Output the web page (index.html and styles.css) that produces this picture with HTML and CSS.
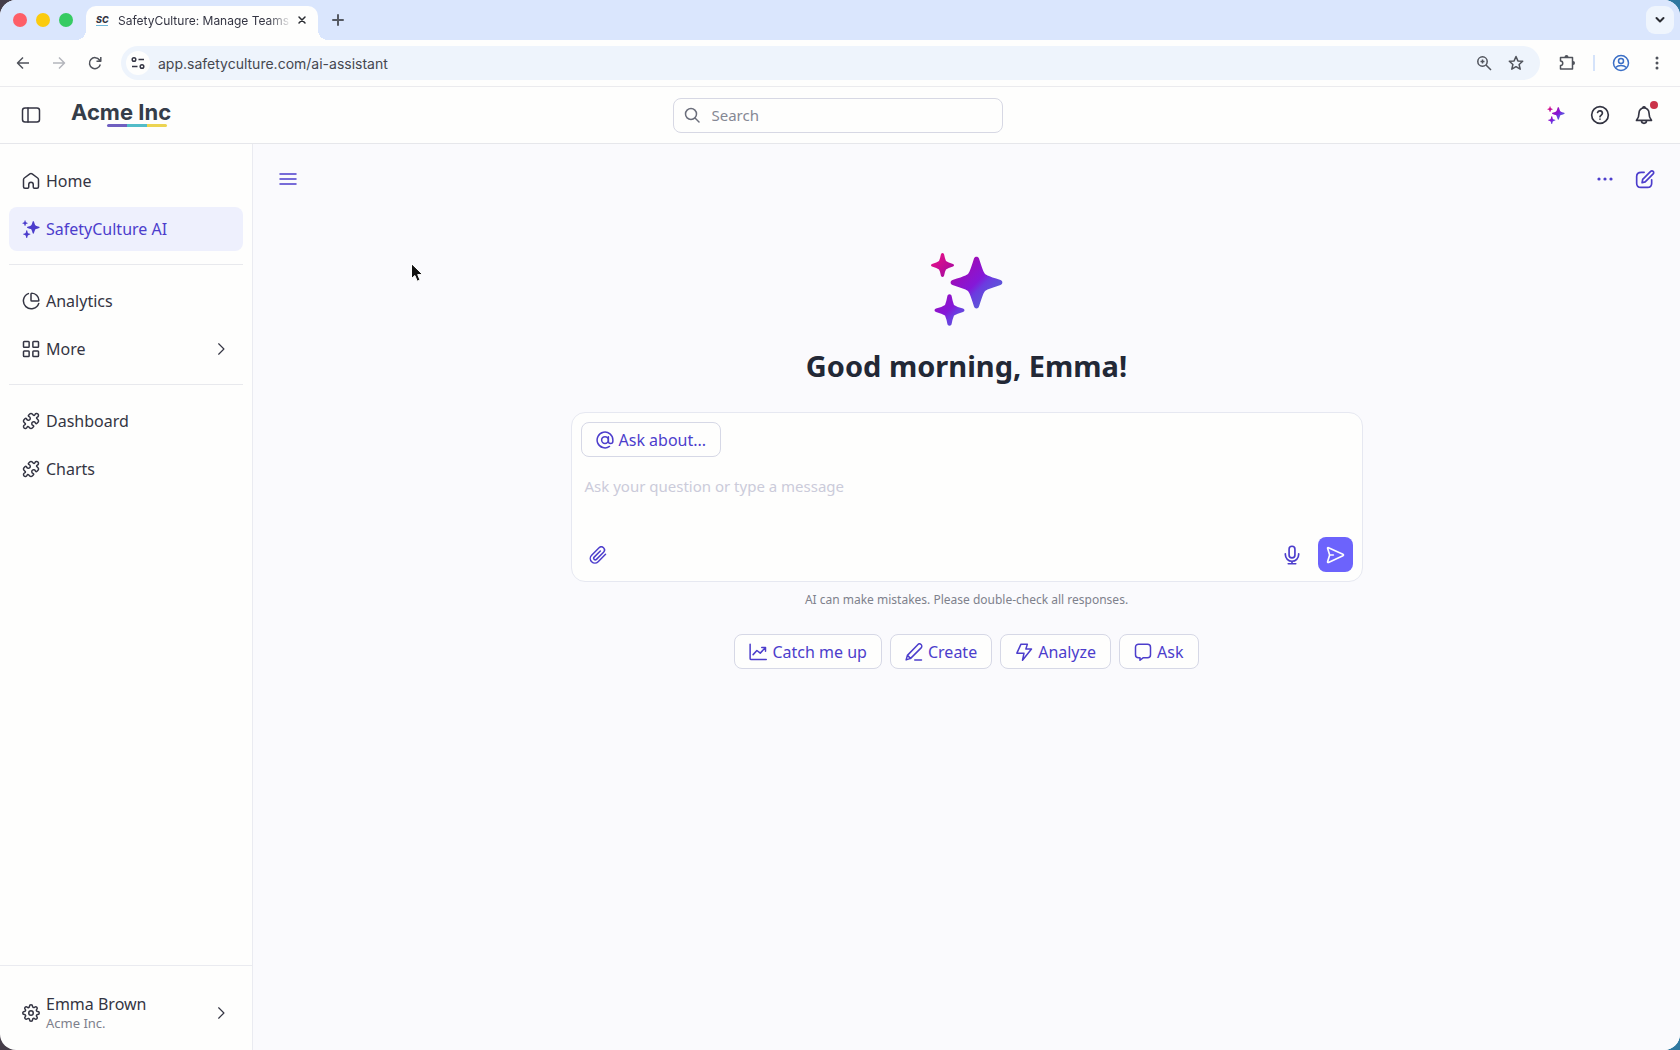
FILE: index.html
```html
<!DOCTYPE html>
<html lang="en">
  <head>
    <meta charset="UTF-8" />
    <meta name="viewport" content="width=device-width, initial-scale=1.0" />
    <title>SafetyCulture: Manage Teams</title>
    <link rel="stylesheet" href="styles.css">
  </head>
  <body>
    <!-- shared shapes -->
    <svg class="defs" width="0" height="0" aria-hidden="true">
      <defs>
        <linearGradient id="spark" gradientUnits="userSpaceOnUse" x1="0" y1="0" x2="60" y2="60">
          <stop offset="0.1" stop-color="#e0108a" />
          <stop offset="0.3" stop-color="#b30c9c" />
          <stop offset="0.48" stop-color="#9410c4" />
          <stop offset="0.64" stop-color="#8418d8" />
          <stop offset="0.72" stop-color="#6c3be0" />
          <stop offset="0.9" stop-color="#5a5cd6" />
        </linearGradient>
        <symbol id="sparkles" viewBox="0 0 74 74">
          <path d="M44 6.500C44.700 4 48.300 4 49 6.500Q52 16 53.500 19.500Q54.500 22.500 57.500 23.500Q61 25 70.500 28C73 28.700 73 32.300 70.500 33Q61 36 57.500 37.500Q54.500 38.500 53.500 41.500Q52 45 49 54.500C48.300 57 44.700 57 44 54.500Q41 45 39.500 41.500Q38.500 38.500 35.500 37.500Q32 36 22.500 33C20 32.300 20 28.700 22.500 28Q32 25 35.500 23.500Q38.500 22.500 39.500 19.500Q41 16 44 6.500Z" />
          <path d="M11 2Q12.500 0 14 2Q15 7 16 9Q18 10.500 23 12Q25 13 23 14.500Q18 16 16 17.500Q15 19 14 24Q12.500 26 11 24Q10 19 9 17.500Q7 16 2 14.500Q0 13 2 12Q7 10.500 9 9Q10 7 11 2Z" />
          <path d="M17.500 43.500Q19.500 41 21.500 43.500Q22.500 49 24 53Q27 55 33 56.500Q36 58 33 60Q27 61.500 24 63.500Q22.500 67 21.500 72.500Q19.500 75 17.500 72.500Q16.500 67 15 63.500Q12 61.500 6 60Q3 58 6 56.500Q12 55 15 53Q16.500 49 17.500 43.500Z" />
        </symbol>
        <symbol id="puzzle" viewBox="0 0 24 24">
          <path d="M19.439 7.85c-.049.322.059.648.289.878l1.568 1.568c.47.47.706 1.087.706 1.704s-.235 1.233-.706 1.704l-1.611 1.611a.98.98 0 0 1-.837.276c-.47-.07-.802-.48-.968-.925a2.501 2.501 0 1 0-3.214 3.214c.446.166.855.497.925.968a.979.979 0 0 1-.276.837l-1.61 1.61a2.404 2.404 0 0 1-1.705.707 2.402 2.402 0 0 1-1.704-.706l-1.568-1.568a1.026 1.026 0 0 0-.877-.29c-.493.074-.84.504-1.02.968a2.5 2.5 0 1 1-3.237-3.237c.464-.18.894-.527.967-1.02a1.026 1.026 0 0 0-.289-.877l-1.568-1.568A2.402 2.402 0 0 1 1.998 12c0-.617.236-1.234.706-1.704L4.23 8.77c.24-.24.581-.353.917-.303.515.077.877.528 1.073 1.01a2.5 2.5 0 1 0 3.259-3.259c-.482-.196-.933-.558-1.01-1.073-.05-.336.062-.676.303-.917l1.525-1.525A2.402 2.402 0 0 1 12 1.998c.617 0 1.234.236 1.704.706l1.568 1.568c.23.23.556.338.877.29.493-.074.84-.504 1.02-.968a2.5 2.5 0 1 1 3.237 3.237c-.464.18-.894.527-.967 1.02Z" />
        </symbol>
        <symbol id="chevron" viewBox="0 0 24 24">
          <path d="M8 3l9 9-9 9" />
        </symbol>
      </defs>
    </svg>

    <div class="window">
      <div class="tab-strip">
        <div class="lights">
          <span class="light red"></span>
          <span class="light yellow"></span>
          <span class="light green"></span>
        </div>
        <div class="tab">
          <span class="favicon">SC</span>
          <span class="tab-title">SafetyCulture: Manage Teams</span>
          <button class="tab-btn" aria-label="Close tab">
            <svg class="icon-10" viewBox="0 0 10 10"><path d="M2 2l6 6M8 2l-6 6" /></svg>
          </button>
        </div>
        <button class="tab-btn new-tab" aria-label="New tab">
          <svg class="icon-12" viewBox="0 0 12 12"><path d="M6 1v10M1 6h10" /></svg>
        </button>
        <button class="tab-btn tab-search" aria-label="Search tabs">
          <svg class="icon-10" viewBox="0 0 10 10"><path d="M1.500 3l3.500 3.500L8.500 3" /></svg>
        </button>
      </div>

      <div class="toolbar">
        <button class="tool" aria-label="Back">
          <svg class="icon-16" viewBox="0 0 16 16"><path d="M14 8H2.500M8 2.500L2.500 8 8 13.500" /></svg>
        </button>
        <button class="tool faded" aria-label="Forward">
          <svg class="icon-16" viewBox="0 0 16 16"><path d="M2 8h11.500M8 2.500L13.500 8 8 13.500" /></svg>
        </button>
        <button class="tool" aria-label="Reload">
          <svg class="icon-16" viewBox="0 0 16 16"><path d="M13.300 9.500A5.500 5.500 0 1 1 12.500 5L13.500 6M13.800 2v4.300H9.500" /></svg>
        </button>
        <div class="address">
          <button class="site-info" aria-label="Site information">
            <svg class="icon-16" viewBox="0 0 16 16"><circle cx="4" cy="4.500" r="1.800" /><path d="M8.500 4.500H14M2 11.500h5.500" /><circle cx="12" cy="11.500" r="1.800" /></svg>
          </button>
          <input class="url" type="text" aria-label="Address" value="app.safetyculture.com/ai-assistant">
          <button class="tool" aria-label="Zoom">
            <svg class="icon-16" viewBox="0 0 16 16"><circle cx="6.500" cy="6.500" r="4.700" /><path d="M10 10l5 5M6.500 4.500v4M4.500 6.500h4" /></svg>
          </button>
          <button class="tool" aria-label="Bookmark">
            <svg class="icon-16" viewBox="0 0 16 16"><path d="M8 1.500l1.900 4.400 4.800.4-3.600 3.200 1.100 4.700L8 11.700l-4.200 2.500 1.100-4.700L1.300 6.300l4.800-.4z" /></svg>
          </button>
        </div>
        <button class="tool" aria-label="Extensions">
          <svg class="icon-18" viewBox="0 0 18 18"><path d="M2.500 3.500h12v11.500h-12v-3.500c3 0 3-4.500 0-4.500z" /><path class="solid" d="M6.500 3a2 2 0 0 1 4 0zM15 7a2 2 0 0 1 0 4z" /></svg>
        </button>
        <span class="tool-divider"></span>
        <button class="tool profile" aria-label="Profile">
          <svg class="icon-18" viewBox="0 0 18 18"><circle cx="9" cy="9" r="7.500" /><circle cx="9" cy="7" r="2.500" /><path d="M3.500 13.500c3-2.600 8-2.600 11 0" /></svg>
        </button>
        <button class="tool" aria-label="Browser menu">
          <svg class="icon-16" viewBox="0 0 16 16"><g class="solid"><circle cx="8" cy="3" r="1.500" /><circle cx="8" cy="8" r="1.500" /><circle cx="8" cy="13" r="1.500" /></g></svg>
        </button>
      </div>

      <header class="app-header">
        <div class="header-left">
          <button class="icon-btn" aria-label="Toggle sidebar">
            <svg class="icon-20" viewBox="0 0 20 20"><rect x="1.500" y="3" width="17" height="14" rx="2.500" /><path d="M7 3v14" /></svg>
          </button>
          <a class="logo" href="#">
            Acme Inc
            <span class="logo-line"></span>
          </a>
        </div>
        <label class="search">
          <svg class="icon-16" viewBox="0 0 16 16"><circle cx="7" cy="7" r="5.500" /><path d="M11 11l4 4" /></svg>
          <input type="text" placeholder="Search" aria-label="Search">
        </label>
        <div class="header-right">
          <button class="icon-btn" aria-label="AI assistant">
            <svg class="icon-18 sparkle-gradient"><use href="#sparkles" /></svg>
          </button>
          <button class="icon-btn" aria-label="Help">
            <svg class="icon-20" viewBox="0 0 24 24"><circle cx="12" cy="12" r="10" /><path d="M9.100 9a3 3 0 0 1 5.800 1c0 2-2.900 2.600-2.900 4M12 17v.1" /></svg>
          </button>
          <button class="icon-btn" aria-label="Notifications">
            <svg class="icon-20" viewBox="0 0 24 24"><path d="M3 18.500c2.200-2.500 3-5 3-9a6 6 0 0 1 12 0c0 4 .8 6.500 3 9zM9 19a3 3 0 0 0 6 0M10.500 3.300a1.600 1.600 0 0 1 3 0" /></svg>
            <span class="badge"></span>
          </button>
        </div>
      </header>

      <div class="app">
        <aside class="sidebar">
          <nav>
            <a class="nav-item" href="#">
              <svg class="icon-18" viewBox="0 0 24 24"><path d="M2 10.200c0-.9.400-1.700 1.100-2.200l7.400-5.400a2.600 2.600 0 0 1 3 0L20.900 8c.7.500 1.100 1.300 1.100 2.200v9.300a2 2 0 0 1-2 2h-3.500a1.500 1.500 0 0 1-1.500-1.500v-3.500a3 3 0 0 0-6 0V20a1.500 1.500 0 0 1-1.500 1.500H4a2 2 0 0 1-2-2z" /></svg>
              <span>Home</span>
            </a>
            <a class="nav-item active" href="#">
              <svg class="icon-18 sparkle-solid"><use href="#sparkles" /></svg>
              <span>SafetyCulture AI</span>
            </a>
            <hr>
            <a class="nav-item" href="#">
              <svg class="icon-18" viewBox="0 0 24 24"><path d="M8.500 2.100a10.500 10.500 0 1 0 13.800 13.200M12 2.500a1 1 0 0 1 1-1 10 10 0 0 1 9.500 9.500 1 1 0 0 1-1 1H13a1 1 0 0 1-1-1z" /></svg>
              <span>Analytics</span>
            </a>
            <a class="nav-item" href="#">
              <svg class="icon-18" viewBox="0 0 24 24"><rect x="2" y="2" width="7.500" height="7.500" rx="1" /><rect x="14.500" y="2" width="7.500" height="7.500" rx="1" /><rect x="2" y="14.500" width="7.500" height="7.500" rx="1" /><rect x="14.500" y="14.500" width="7.500" height="7.500" rx="1" /></svg>
              <span>More</span>
              <svg class="icon-14 chevron"><use href="#chevron" /></svg>
            </a>
            <hr>
            <a class="nav-item" href="#">
              <svg class="icon-18"><use href="#puzzle" /></svg>
              <span>Dashboard</span>
            </a>
            <a class="nav-item" href="#">
              <svg class="icon-18"><use href="#puzzle" /></svg>
              <span>Charts</span>
            </a>
          </nav>
          <div class="account">
            <a class="nav-item" href="#">
              <svg class="icon-18" viewBox="0 0 24 24"><circle cx="12" cy="12" r="3" /><path d="M19.400 15a1.650 1.650 0 0 0 .33 1.820l.06.06a2 2 0 0 1 0 2.830 2 2 0 0 1-2.830 0l-.06-.06a1.650 1.650 0 0 0-1.820-.33 1.650 1.650 0 0 0-1 1.510V21a2 2 0 0 1-2 2 2 2 0 0 1-2-2v-.09A1.650 1.650 0 0 0 9 19.400a1.650 1.650 0 0 0-1.820.33l-.06.06a2 2 0 0 1-2.830 0 2 2 0 0 1 0-2.830l.06-.06a1.650 1.650 0 0 0 .33-1.820 1.650 1.650 0 0 0-1.510-1H3a2 2 0 0 1-2-2 2 2 0 0 1 2-2h.09A1.650 1.650 0 0 0 4.600 9a1.650 1.650 0 0 0-.33-1.820l-.06-.06a2 2 0 0 1 0-2.830 2 2 0 0 1 2.830 0l.06.06a1.650 1.650 0 0 0 1.820.33H9a1.650 1.650 0 0 0 1-1.510V3a2 2 0 0 1 2-2 2 2 0 0 1 2 2v.09a1.650 1.650 0 0 0 1 1.510 1.650 1.650 0 0 0 1.820-.33l.06-.06a2 2 0 0 1 2.830 0 2 2 0 0 1 0 2.830l-.06.06a1.650 1.650 0 0 0-.33 1.820V9a1.650 1.650 0 0 0 1.510 1H21a2 2 0 0 1 2 2 2 2 0 0 1-2 2h-.09a1.650 1.650 0 0 0-1.510 1z" /></svg>
              <span class="user">
                <span>Emma Brown</span>
                <small>Acme Inc.</small>
              </span>
              <svg class="icon-14 chevron"><use href="#chevron" /></svg>
            </a>
          </div>
        </aside>

        <main class="main">
          <div class="main-bar">
            <button class="icon-btn" aria-label="Conversations">
              <svg class="icon-20" viewBox="0 0 20 20"><path d="M2 5h16M2 10h16M2 15h16" /></svg>
            </button>
            <button class="icon-btn push" aria-label="More options">
              <svg class="icon-20" viewBox="0 0 20 20"><g class="solid"><circle cx="4" cy="10" r="1.600" /><circle cx="10" cy="10" r="1.600" /><circle cx="16" cy="10" r="1.600" /></g></svg>
            </button>
            <button class="icon-btn" aria-label="New chat">
              <svg class="icon-20" viewBox="0 0 24 24"><path d="M11 4H7.500C4 4 2 5.500 2 9v8c0 3.500 1.500 5 5 5h8c3.500 0 5-1.500 5-5v-4M8.500 16.500l.7-4L18.800 2.900a2.100 2.100 0 0 1 3 3L12.200 15.500z" /></svg>
            </button>
          </div>

          <section class="chat">
            <svg class="hero sparkle-gradient"><use href="#sparkles" /></svg>
            <h1>Good morning, Emma!</h1>
            <form class="composer">
              <button type="button" class="chip">
                <svg class="icon-18" viewBox="0 0 24 24"><circle cx="12" cy="12" r="4.500" /><path d="M16.500 7.500V13.500a3 3 0 0 0 6 0V12a10.500 10.500 0 1 0-4.500 8.600" /></svg>
                Ask about...
              </button>
              <textarea aria-label="Message" placeholder="Ask your question or type a message"></textarea>
              <div class="composer-actions">
                <button type="button" class="icon-btn" aria-label="Attach file">
                  <svg class="icon-18" viewBox="0 0 24 24"><path d="M22 11l-9.800 9.900a6 6 0 0 1-8.700-8.600l9.900-9.900a4.200 4.200 0 0 1 6 5.900l-9.500 9.500a2.100 2.100 0 0 1-3-3l8.200-8.200" /></svg>
                </button>
                <button type="button" class="icon-btn push" aria-label="Dictate">
                  <svg class="icon-20" viewBox="0 0 24 24"><rect x="8.500" y="1.500" width="7" height="14" rx="3.500" /><path d="M4 10.500v1a8 8 0 0 0 16 0v-1M12 19.500V22.500M7.500 22.500h9" /></svg>
                </button>
                <button type="submit" class="send" aria-label="Send">
                  <svg class="icon-20" viewBox="0 0 24 24"><path d="M10 12H5.500M5.400 12.700L3.200 19.800c-.3.900 0 1.500 1 1.100L21.500 12.900c.9-.4.900-1.300 0-1.800L4.200 3.200c-1-.4-1.300.200-1 1.100l2.200 7c.1.500.1.900 0 1.400z" /></svg>
                </button>
              </div>
            </form>
            <p class="note">AI can make mistakes. Please double-check all responses.</p>
            <div class="chips">
              <button class="chip">
                <svg class="icon-18" viewBox="0 0 24 24"><path d="M1.500 1.500v19a1.500 1.500 0 0 0 1.500 1.500h20M5.500 15.500l5-5.500 4.500 3.500 7-7.500M17 6h5v5" /></svg>
                Catch me up
              </button>
              <button class="chip">
                <svg class="icon-18" viewBox="0 0 24 24"><path d="M13 22.500h9M1.500 22.500l1.700-6L17 2.200a3 3 0 0 1 4.500 4.300L7.500 20.500zM3.200 16.500l4.300 4" /></svg>
                Create
              </button>
              <button class="chip">
                <svg class="icon-18" viewBox="0 0 24 24"><path d="M8 1.500h8.500L14.500 8H22L10 23l2-9.500H2.500z" /></svg>
                Analyze
              </button>
              <button class="chip">
                <svg class="icon-18" viewBox="0 0 24 24"><path d="M6 1.500h12a4 4 0 0 1 4 4v10a4 4 0 0 1-4 4h-5.500L8 23v-3.500H6a4 4 0 0 1-4-4v-10a4 4 0 0 1 4-4z" /></svg>
                Ask
              </button>
            </div>
          </section>
        </main>
      </div>
    </div>

    <svg class="cursor" viewBox="0 0 14 20" aria-hidden="true"><path d="M1.500 1v14.500l3.400-3 2.300 5.700 2.800-1.200-2.300-5.400h4.600z" /></svg>
  </body>
</html>
```
FILE: styles.css
```css
* {
  box-sizing: border-box;
}
body {
  margin: 0;
  height: 100vh;
  font-family: "Noto Sans", sans-serif;
  font-size: 16px;
  color: #343543;
  background: linear-gradient(to right, #453d48, #2f78a0);
}
button,
input,
textarea {
  font: inherit;
  color: inherit;
  border: none;
  background: none;
  padding: 0;
  outline: none;
}
button {
  display: flex;
  align-items: center;
  justify-content: center;
  cursor: pointer;
}
a {
  color: inherit;
  text-decoration: none;
}
svg {
  display: block;
  flex: none;
  fill: none;
  stroke: currentColor;
  stroke-width: 2;
  stroke-linecap: round;
  stroke-linejoin: round;
}
.defs {
  position: absolute;
}
.solid {
  fill: currentColor;
  stroke: none;
}
.icon-10 {
  width: 10px;
  height: 10px;
}
.icon-12 {
  width: 12px;
  height: 12px;
}
.icon-14 {
  width: 14px;
  height: 14px;
}
.icon-16 {
  width: 16px;
  height: 16px;
}
.icon-18 {
  width: 18px;
  height: 18px;
}
.icon-20 {
  width: 20px;
  height: 20px;
}
.sparkle-gradient {
  fill: url(#spark);
  stroke: none;
}
.sparkle-solid {
  fill: currentColor;
  stroke: none;
}
.window {
  display: flex;
  flex-direction: column;
  height: 100%;
  border-radius: 16px;
  overflow: hidden;
  background-color: #fefefd;
}

/* browser chrome */
.tab-strip {
  display: flex;
  align-items: center;
  height: 40px;
  flex: none;
  padding: 0 6px 0 13px;
  background-color: #dae6fd;
  font-family: Inter, sans-serif;
}
.lights {
  display: flex;
  gap: 9px;
  margin-right: 13px;
}
.light {
  width: 14px;
  height: 14px;
  border-radius: 50%;
}
.light.red {
  background-color: #fe5f68;
}
.light.yellow {
  background-color: #fbcb0e;
}
.light.green {
  background-color: #36cb62;
}
.tab {
  position: relative;
  display: flex;
  align-items: center;
  align-self: flex-end;
  width: 232px;
  height: 34px;
  padding: 0 11px 6px 10px;
  border-radius: 10px 10px 0 0;
  background-color: #fefefd;
}
.tab::before,
.tab::after {
  content: "";
  position: absolute;
  bottom: 0;
  width: 10px;
  height: 10px;
}
.tab::before {
  right: 100%;
  background: radial-gradient(circle at 0 0, transparent 10px, #fefefd 10px);
}
.tab::after {
  left: 100%;
  background: radial-gradient(circle at 100% 0, transparent 10px, #fefefd 10px);
}
.favicon {
  width: 12px;
  margin-right: 10px;
  font-size: 9px;
  font-style: italic;
  font-weight: 800;
  line-height: 10px;
  border-bottom: 1px solid #6fb6d8;
}
.tab-title {
  flex: 1;
  white-space: nowrap;
  font-size: 12px;
  -webkit-mask-image: linear-gradient(to right, #000 150px, transparent 174px);
  mask-image: linear-gradient(to right, #000 150px, transparent 174px);
}
.tab-btn {
  color: #2b2d33;
}
.tab .tab-btn {
  margin-left: 5px;
}
.new-tab {
  margin-left: 14px;
}
.tab .tab-btn svg {
  stroke-width: 1.5;
}
.new-tab svg {
  color: #555962;
}
.tab-search {
  width: 28px;
  height: 28px;
  margin-left: auto;
  border-radius: 9px;
  background-color: #eff5fd;
}
.toolbar {
  display: flex;
  align-items: center;
  gap: 12px;
  height: 47px;
  flex: none;
  padding: 0 11px;
  border-bottom: 1px solid #ebebee;
  background-color: #fefefd;
}
.tool {
  width: 24px;
  height: 24px;
  color: #50535b;
}
.tool svg,
.site-info svg {
  stroke-width: 1.5;
  stroke-linecap: butt;
}
.tool.faded {
  color: #b4b6bc;
}
.tool.profile {
  color: #3b6fc6;
}
.address {
  display: flex;
  flex: 1;
  align-items: center;
  gap: 8px;
  height: 34px;
  margin: 0 3px 0 2px;
  padding: 0 12px 0 5px;
  border-radius: 17px;
  background-color: #eef4fc;
}
.site-info {
  width: 24px;
  height: 24px;
  border-radius: 50%;
  background-color: #fefefd;
}
.url {
  flex: 1;
  min-width: 0;
  font-family: Inter, sans-serif;
  font-size: 14px;
  color: #45474f;
}
.tool-divider {
  width: 2px;
  height: 16px;
  margin: 0 2px;
  background-color: #d5e3fa;
}

/* app header */
.app-header {
  display: grid;
  grid-template-columns: 1fr 330px 1fr;
  align-items: center;
  height: 57px;
  flex: none;
  padding: 0 24px 0 19px;
  border-bottom: 1px solid #e6e7eb;
}
.header-left,
.header-right {
  display: flex;
  align-items: center;
}
.header-right {
  justify-content: flex-end;
  gap: 20px;
}
.icon-btn {
  position: relative;
  width: 24px;
  height: 24px;
}
.icon-btn svg {
  stroke-width: 1.5;
}
.icon-btn svg[viewBox="0 0 24 24"] {
  stroke-width: 2;
}
.logo {
  display: flex;
  flex-direction: column;
  margin-left: 28px;
  padding-bottom: 4px;
  font-family: Inter, sans-serif;
  font-size: 22px;
  font-weight: 700;
  line-height: 24px;
  color: #353d49;
}
.logo-line {
  width: 60px;
  height: 3px;
  margin-left: 36px;
  border-radius: 2px;
  background: linear-gradient(to right, #7060c0 20px, #52bcc8 20px, #52bcc8 40px, #ecd452 40px);
}
.search {
  display: flex;
  align-items: center;
  gap: 12px;
  height: 35px;
  padding: 0 10px;
  border: 1px solid #d7d8e4;
  border-radius: 8px;
  font-size: 15px;
  color: #6b6e7b;
}
.search svg {
  stroke-width: 1.5;
}
.search input {
  flex: 1;
  min-width: 0;
}
.search input::placeholder {
  color: #858894;
}
.badge {
  position: absolute;
  top: -2px;
  right: -2px;
  width: 8px;
  height: 8px;
  border-radius: 50%;
  background-color: #cb3349;
}

/* sidebar */
.app {
  display: flex;
  flex: 1;
  min-height: 0;
}
.sidebar {
  display: flex;
  flex-direction: column;
  justify-content: space-between;
  width: 253px;
  flex: none;
  border-right: 1px solid #eaebf1;
}
nav {
  display: flex;
  flex-direction: column;
  gap: 4px;
  padding: 15px 9px;
}
nav hr {
  width: 100%;
  margin: 9px 0 10px;
  border: none;
  border-top: 1px solid #e8e9ed;
}
.nav-item {
  display: flex;
  align-items: center;
  gap: 6px;
  height: 44px;
  padding: 0 15px 0 13px;
  border-radius: 8px;
}
.nav-item.active {
  color: #4c3dcc;
  background-color: #eef0fd;
}
.chevron {
  margin-left: auto;
}
.account {
  padding: 25px 9px 15px;
  border-top: 1px solid #eaebf0;
}
.user {
  display: flex;
  flex-direction: column;
  line-height: 20px;
}
.user small {
  font-size: 13px;
  line-height: 18px;
  color: #7d808c;
}

/* assistant */
.main {
  flex: 1;
  min-width: 0;
  color: #4c3dcc;
  background-color: #fafafd;
}
.main-bar {
  display: flex;
  align-items: center;
  gap: 16px;
  padding: 23px 23px 0;
}
.push {
  margin-left: auto;
}
.chat {
  display: flex;
  flex-direction: column;
  align-items: center;
  padding: 61px 24px;
}
.hero {
  width: 74px;
  height: 74px;
}
h1 {
  margin: 18px 0 24px;
  font-size: 29px;
  font-weight: 700;
  line-height: 44px;
  color: #222836;
}
.composer {
  display: flex;
  flex-direction: column;
  align-items: flex-start;
  width: 100%;
  max-width: 792px;
  padding: 9px;
  border: 1px solid #e6e8f1;
  border-radius: 14px;
  background-color: #fefefd;
}
.chip {
  gap: 5px;
  height: 35px;
  padding: 0 14px;
  border: 1px solid #d6d8e6;
  border-radius: 8px;
  background-color: #fefefd;
}
textarea {
  width: 100%;
  height: 63px;
  margin: 17px 0 0;
  padding: 0 4px;
  resize: none;
  font-size: 15px;
  line-height: 24px;
  color: #3c3d4a;
}
textarea::placeholder {
  color: #cbcbda;
}
.composer-actions {
  display: flex;
  align-items: center;
  gap: 14px;
  width: 100%;
  padding-left: 5px;
}
.send {
  width: 35px;
  height: 35px;
  border-radius: 8px;
  color: #fefefd;
  background-color: #6c63fc;
}
.note {
  margin: 9px 0 25px;
  font-size: 12px;
  line-height: 18px;
  color: #7e818c;
}
.chips {
  display: flex;
  flex-wrap: wrap;
  gap: 8px;
}

.cursor {
  position: absolute;
  left: 410px;
  top: 263px;
  width: 14px;
  height: 20px;
  fill: #111;
  stroke: #fff;
  stroke-width: 1;
}
```
